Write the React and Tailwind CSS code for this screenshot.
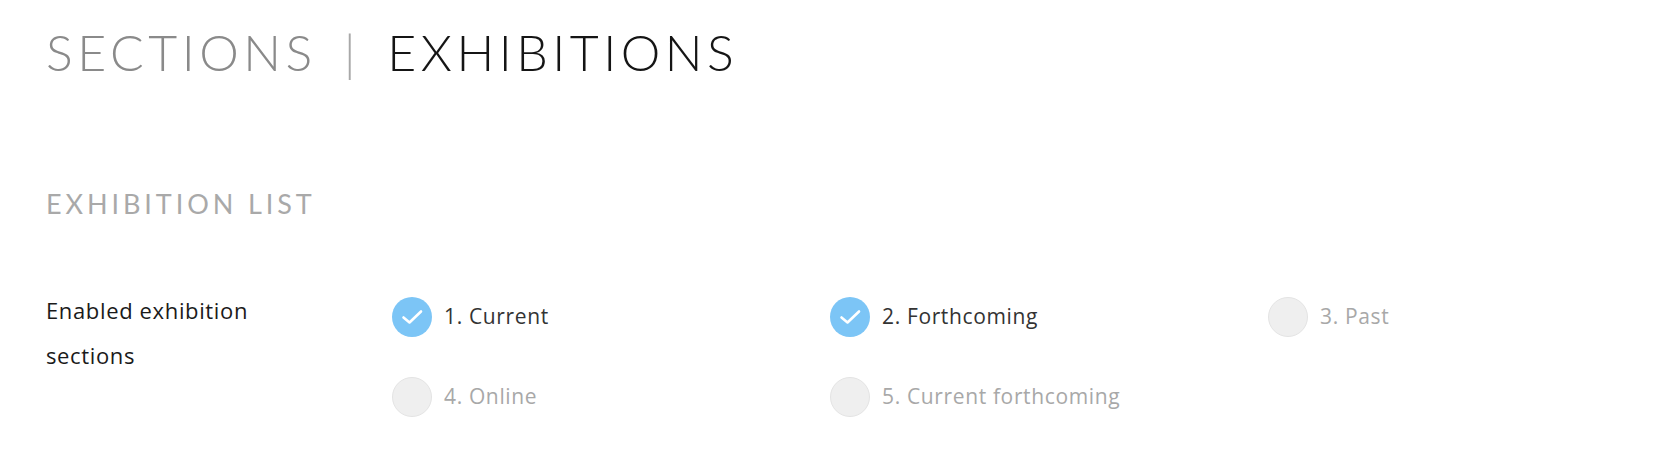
import React from 'react'

const options = [
  { label: '1. Current', on: true },
  { label: '2. Forthcoming', on: true },
  { label: '3. Past', on: false },
  { label: '4. Online', on: false },
  { label: '5. Current forthcoming', on: false },
]

const Check = ({ on }) => (
  <span
    className={
      on
        ? 'flex h-[40px] w-[40px] shrink-0 items-center justify-center rounded-full bg-[#7cc5f6]'
        : 'flex h-[40px] w-[40px] shrink-0 items-center justify-center rounded-full border border-[#e4e4e4] bg-[#efefef]'
    }
  >
    {on && (
      <svg width="22" height="16" viewBox="0 0 22 16" fill="none">
        <path d="M2.5 8.5l6 5L20 2.5" stroke="white" strokeWidth="2.6" strokeLinecap="round" strokeLinejoin="round" />
      </svg>
    )}
  </span>
)

const App = () => {
  return (
    <div className="h-[458px] w-[1680px] bg-white pl-[46px] pt-[27px] font-['Lato','Liberation_Sans',sans-serif]">
      <h1 className="flex items-center text-[50px] font-light leading-[50px] tracking-[0.09em]">
        <span className="text-[#8a8a8a]">SECTIONS</span>
        <span className="mx-[27px] text-[#a8a8a8]">|</span>
        <span className="text-[#151515]">EXHIBITIONS</span>
      </h1>

      <h2 className="mt-[113px] text-[27px] leading-[27px] font-normal tracking-[0.145em] text-[#a9a9a9]">
        EXHIBITION LIST
      </h2>

      <div className="mt-[80px] flex font-['Open_Sans','Liberation_Sans',sans-serif] tracking-[0.04em]">
        <div className="-mt-[9px] w-[346px] shrink-0 text-[22px] leading-[45px] text-[#1a1a1a]">
          Enabled exhibition
          <br />
          sections
        </div>
        <div className="grid w-[1314px] shrink-0 grid-cols-3 gap-y-[40px]">
          {options.map((o) => (
            <label key={o.label} className="flex h-[40px] items-center gap-[12px]">
              <Check on={o.on} />
              <span className={o.on ? 'text-[21px] text-[#333333]' : 'text-[21px] text-[#a8a8a8]'}>{o.label}</span>
            </label>
          ))}
        </div>
      </div>
    </div>
  )
}

export default App
